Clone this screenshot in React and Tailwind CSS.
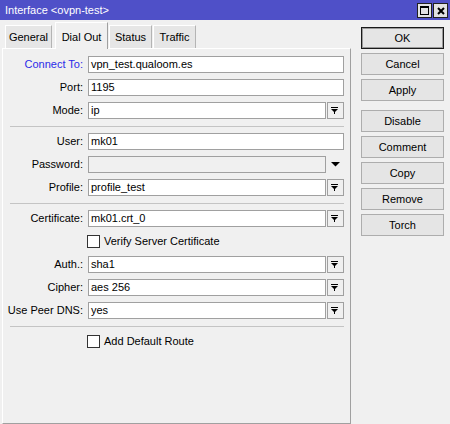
import React from "react";

function DropIcon() {
  return (
    <svg width="15" height="15" viewBox="0 0 15 15" className="block">
      <rect x="3" y="4" width="7" height="1" fill="#000" />
      <polygon points="3,6 10,6 6.5,9.5" fill="#000" />
      <rect x="6" y="9" width="1" height="2" fill="#000" />
    </svg>
  );
}

function Row({ label, blue, children }) {
  return (
    <div className="flex h-[17px] items-center">
      <div className={blue ? "w-[80px] text-right text-[#2b2be8]" : "w-[80px] text-right text-black"}>{label}</div>
      <div className="ml-[5px] flex h-[17px]">{children}</div>
    </div>
  );
}

function TextBox({ value }) {
  return (
    <div className="h-[17px] w-[256px] border border-[#a0a0a0] bg-white pl-[2px] leading-[15px]">{value}</div>
  );
}

function SelectBox({ value }) {
  return (
    <div className="flex h-[17px]">
      <div className="h-[17px] w-[238px] border border-[#a0a0a0] bg-white pl-[2px] leading-[15px]">{value}</div>
      <div className="ml-[1px] h-[17px] w-[17px] border border-[#a0a0a0] bg-[#f0f0f0]">
        <DropIcon />
      </div>
    </div>
  );
}

function PasswordBox() {
  return (
    <div className="flex h-[17px]">
      <div className="h-[17px] w-[238px] border border-[#a0a0a0] bg-[#f0f0f0]" />
      <div className="ml-[1px] flex h-[17px] w-[17px] items-center justify-center">
        <svg width="9" height="5" viewBox="0 0 9 5" className="block">
          <polygon points="0,0 9,0 4.5,4.5" fill="#000" />
        </svg>
      </div>
    </div>
  );
}

function Sep() {
  return <div className="ml-[7px] mt-[1px] h-[1px] w-[334px] bg-[#c4c4c4]" />;
}

function Check({ label }) {
  return (
    <div className="flex h-[17px] items-center pl-[84px]">
      <div className="h-[13px] w-[13px] border border-[#333333] bg-white" />
      <span className="ml-[4px] leading-[13px]">{label}</span>
    </div>
  );
}

function Btn({ children, primary, extra }) {
  const cls = primary
    ? "flex h-[22px] w-[83px] items-center justify-center border border-[#1a1a1a] bg-[#e5e5e5] shadow-[inset_0_0_0_1px_#9a9a9a]"
    : "flex h-[22px] w-[83px] items-center justify-center border border-[#adadad] bg-[#e5e5e5]";
  return <div className={extra ? cls + " mt-[5px]" : cls}>{children}</div>;
}

export default function App() {
  return (
    <div className="h-[424px] w-[450px] overflow-hidden bg-[#f0f0f0] font-['Liberation_Sans',Arial,sans-serif] text-[11px] text-black">
      {/* title bar */}
      <div className="flex h-[20px] items-start justify-between bg-[#4f50c8] pl-[5px] pr-[2px]">
        <span className="mt-[4px] leading-[13px] text-white">Interface &lt;ovpn-test&gt;</span>
        <div className="mt-[3px] flex gap-[1px]">
          <div className="flex h-[15px] w-[15px] items-center justify-center border border-[#202020] bg-[#e2e2e2]">
            <svg width="9" height="9" viewBox="0 0 9 9" className="block">
              <rect x="0.5" y="0.5" width="8" height="8" fill="none" stroke="#000" />
              <rect x="0" y="0" width="9" height="2" fill="#000" />
            </svg>
          </div>
          <div className="flex h-[15px] w-[15px] items-center justify-center border border-[#202020] bg-[#e2e2e2]">
            <svg width="8" height="8" viewBox="0 0 8 8" className="block">
              <path d="M1 1 L7 7 M7 1 L1 7" stroke="#000" strokeWidth="2" />
            </svg>
          </div>
        </div>
      </div>

      <div className="flex">
        {/* left column */}
        <div className="w-[351px]">
          {/* tabs */}
          <div className="flex h-[28px] items-end">
            <div className="ml-[5px] flex h-[23px] w-[47px] items-center justify-center border-l border-t border-r border-l-white border-t-white border-r-[#b4b4b4] bg-[#e6e6e6]">
              General
            </div>
            <div className="relative z-10 -mb-[1px] ml-[3px] flex h-[27px] w-[53px] items-start justify-center border-l border-t border-r border-l-white border-t-white border-r-[#a0a0a0] bg-[#f0f0f0] pt-[6px]">
              Dial Out
            </div>
            <div className="ml-[1px] flex h-[23px] w-[43px] items-center justify-center border-l border-t border-r border-l-white border-t-white border-r-[#b4b4b4] bg-[#e6e6e6]">
              Status
            </div>
            <div className="ml-[1px] flex h-[23px] w-[43px] items-center justify-center border-l border-t border-r border-l-white border-t-white border-r-[#b4b4b4] bg-[#e6e6e6]">
              Traffic
            </div>
          </div>

          {/* panel */}
          <div className="ml-[2px] flex h-[376px] w-[349px] flex-col gap-[6px] border-b border-l border-r border-t border-b-[#a0a0a0] border-l-white border-r-[#a0a0a0] border-t-white pt-[7px]">
            <Row label="Connect To:" blue>
              <TextBox value="vpn_test.qualoom.es" />
            </Row>
            <Row label="Port:">
              <TextBox value="1195" />
            </Row>
            <Row label="Mode:">
              <SelectBox value="ip" />
            </Row>
            <Sep />
            <Row label="User:">
              <TextBox value="mk01" />
            </Row>
            <Row label="Password:">
              <PasswordBox />
            </Row>
            <Row label="Profile:">
              <SelectBox value="profile_test" />
            </Row>
            <Sep />
            <Row label="Certificate:">
              <SelectBox value="mk01.crt_0" />
            </Row>
            <Check label="Verify Server Certificate" />
            <Row label="Auth.:">
              <SelectBox value="sha1" />
            </Row>
            <Row label="Cipher:">
              <SelectBox value="aes 256" />
            </Row>
            <Row label="Use Peer DNS:">
              <SelectBox value="yes" />
            </Row>
            <Sep />
            <Check label="Add Default Route" />
          </div>
        </div>

        {/* right column */}
        <div className="ml-[10px] flex w-[83px] flex-col gap-[4px] pt-[7px]">
          <Btn primary>OK</Btn>
          <Btn>Cancel</Btn>
          <Btn>Apply</Btn>
          <Btn extra>Disable</Btn>
          <Btn>Comment</Btn>
          <Btn>Copy</Btn>
          <Btn>Remove</Btn>
          <Btn>Torch</Btn>
        </div>
      </div>
    </div>
  );
}
